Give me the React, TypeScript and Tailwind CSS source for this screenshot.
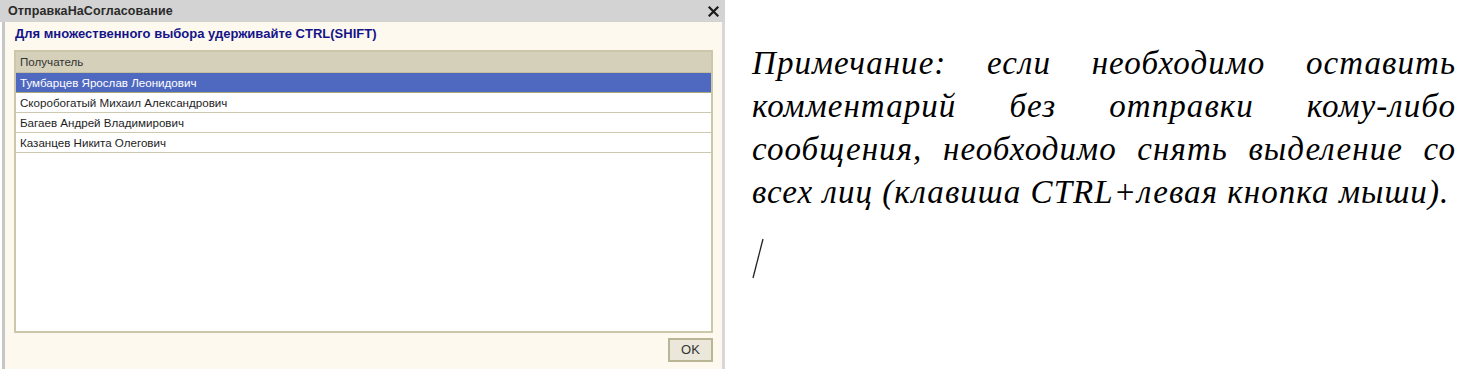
const ROWS = [
  "Тумбарцев Ярослав Леонидович",
  "Скоробогатый Михаил Александрович",
  "Багаев Андрей Владимирович",
  "Казанцев Никита Олегович",
];

const NOTE = [
  "Примечание: если необходимо оставить",
  "комментарий без отправки кому-либо",
  "сообщения, необходимо снять выделение со",
  "всех лиц (клавиша CTRL+левая кнопка мыши).",
];

function Dialog() {
  return (
    <div className="w-[725px] h-[369px] flex flex-col shrink-0 font-['Liberation_Sans',Arial,sans-serif]">
      {/* Title bar */}
      <div className="h-[22px] bg-[#d3d3d3] flex items-center justify-between pl-[8px] pr-[6px] shrink-0">
        <span className="text-[12.5px] font-bold text-[#2a2a2a] tracking-[0.1px]">ОтправкаНаСогласование</span>
        <svg width="11" height="11" viewBox="0 0 11 11" className="mt-[1px]">
          <path d="M1.5 1.5 L9.5 9.5 M9.5 1.5 L1.5 9.5" stroke="#1a1a1a" strokeWidth="2.2" strokeLinecap="square" />
        </svg>
      </div>

      {/* Body */}
      <div className="flex-1 ml-[2px] border-l-[3px] border-r-[3px] border-l-[#c6c6c6] border-r-[#d8d8d8] bg-[#fdf9ee] px-[9px] flex flex-col">
        <div className="h-[24px] flex items-center text-[13px] font-bold text-[#14148a] pl-[1px]">
          Для множественного выбора удерживайте CTRL(SHIFT)
        </div>

        <div className="mt-[4px] h-[283px] border-2 border-[#cbc7ab] bg-white flex flex-col">
          <div className="h-[21px] bg-[#d4d0ba] flex items-center pl-[4px] text-[11.6px] text-[#333] border-b border-[#c2be9e]">
            Получатель
          </div>
          {ROWS.map((r, i) => (
            <div
              key={r}
              className={`h-[20px] flex items-center pl-[4px] text-[11.6px] border-b ${
                i === 0
                  ? "bg-[#4f69c0] text-white border-[#a8a87a]"
                  : "bg-white text-[#1e1e1e] border-[#cdc9b0]"
              }`}
            >
              {r}
            </div>
          ))}
        </div>

        <div className="flex justify-end mt-[5px]">
          <button className="w-[45px] h-[24px] bg-[#ebe7da] border-2 border-[#bab594] text-[13px] text-[#333] flex items-center justify-center">
            OK
          </button>
        </div>
      </div>
    </div>
  );
}

export default function App() {
  return (
    <div className="w-[1473px] h-[373px] bg-white flex overflow-hidden">
      <Dialog />
      <div className="flex flex-col pl-[27px] pt-[42px] w-[731px]">
        <div className="italic text-black text-[33px] leading-[43px] tracking-[1.05px] font-['Liberation_Serif','Times_New_Roman',serif]">
          {NOTE.map((line, i) => (
            <p
              key={i}
              className={`text-justify ${i < 3 ? "[text-align-last:justify]" : "[text-align-last:left]"}`}
            >
              {line}
            </p>
          ))}
        </div>
        <svg width="14" height="42" viewBox="0 0 14 42" className="mt-[24px]">
          <path d="M11 1 L1 40" stroke="#222" strokeWidth="1.3" />
        </svg>
      </div>
    </div>
  );
}
